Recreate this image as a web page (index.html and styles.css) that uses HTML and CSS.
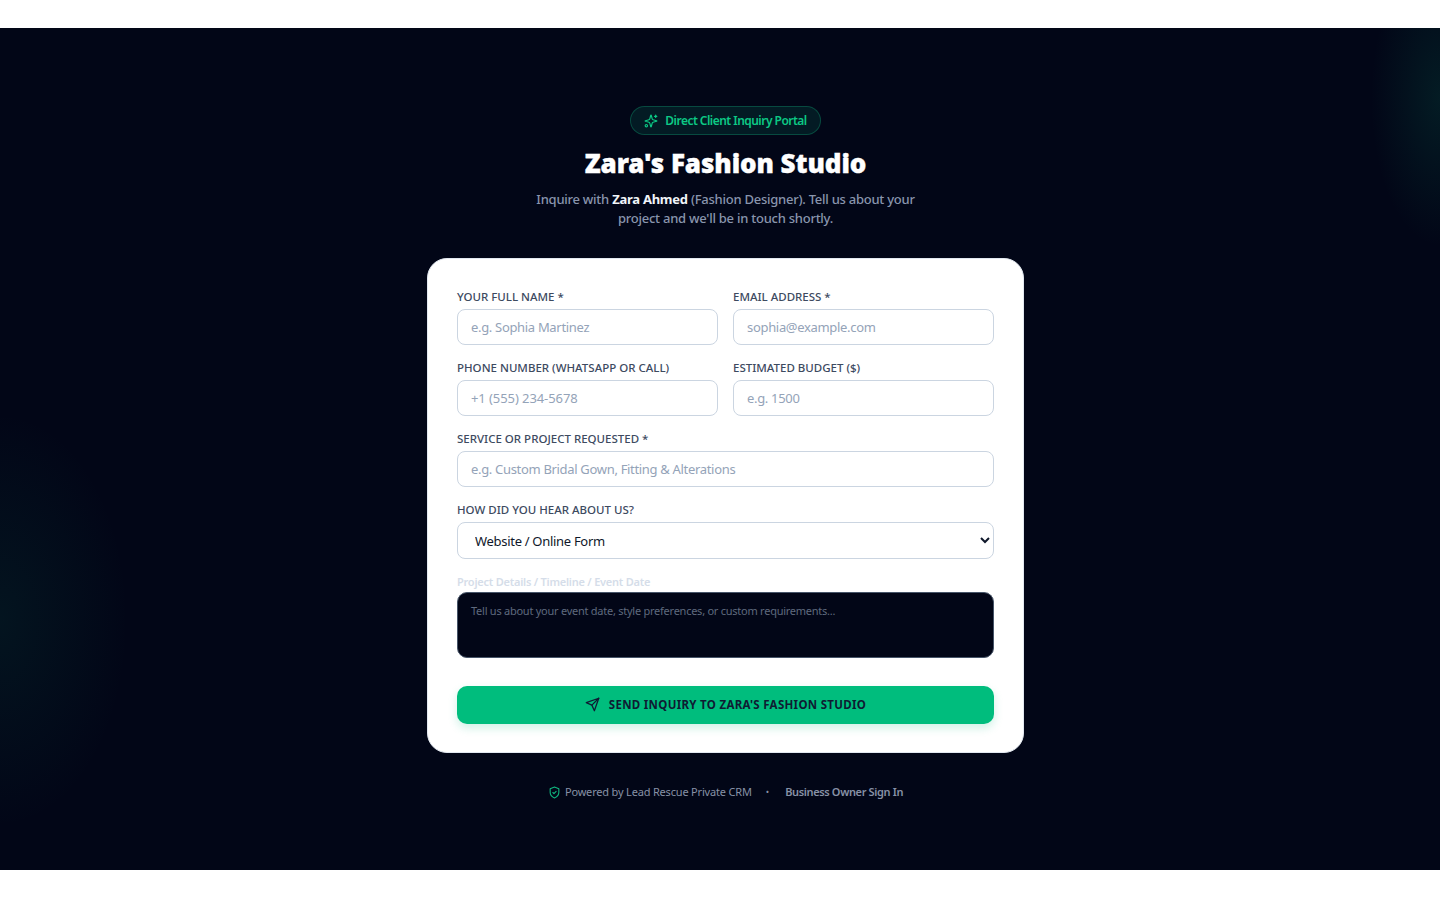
FILE: index.html
```html
<!DOCTYPE html>
<html lang="en">
<head>
<meta charset="utf-8">
<title>Zara's Fashion Studio</title>
<link rel="stylesheet" href="styles.css">
</head>
<body>
<main class="stage">
  <div class="glow glow-right"></div>
  <div class="glow glow-left"></div>
  <div class="column">
    <header class="hero">
      <div class="badge">
        <svg class="badge-icon" viewBox="0 0 24 24" fill="none" stroke="currentColor" stroke-width="2" stroke-linecap="round" stroke-linejoin="round"><path d="M9.937 15.500A2 2 0 0 0 8.500 14.063l-6.135-1.582a.5.5 0 0 1 0-.962L8.500 9.936A2 2 0 0 0 9.937 8.500l1.582-6.135a.5.5 0 0 1 .963 0L14.063 8.500A2 2 0 0 0 15.500 9.937l6.135 1.581a.5.5 0 0 1 0 .964L15.500 14.063a2 2 0 0 0-1.437 1.437l-1.582 6.135a.5.5 0 0 1-.963 0z"/><path d="M20 2v4"/><path d="M22 4h-4"/><circle cx="4" cy="20" r="2"/></svg>
        <span>Direct Client Inquiry Portal</span>
      </div>
      <h1>Zara's Fashion Studio</h1>
      <p>Inquire with <strong>Zara Ahmed</strong> (Fashion Designer). Tell us about your project and we'll be in touch shortly.</p>
    </header>
    <form class="card">
      <div class="row two">
        <div class="field"><label>YOUR FULL NAME *</label><input type="text" placeholder="e.g. Sophia Martinez"></div>
        <div class="field"><label>EMAIL ADDRESS *</label><input type="text" placeholder="sophia@example.com"></div>
      </div>
      <div class="row two">
        <div class="field"><label>PHONE NUMBER (WHATSAPP OR CALL)</label><input class="numeric" type="text" placeholder="+1 (555) 234-5678"></div>
        <div class="field"><label>ESTIMATED BUDGET ($)</label><input type="text" placeholder="e.g. 1500"></div>
      </div>
      <div class="row">
        <div class="field"><label>SERVICE OR PROJECT REQUESTED *</label><input type="text" placeholder="e.g. Custom Bridal Gown, Fitting &amp; Alterations"></div>
      </div>
      <div class="row">
        <div class="field"><label>HOW DID YOU HEAR ABOUT US?</label>
          <select><option>Website / Online Form</option></select>
        </div>
      </div>
      <div class="details">
        <label>Project Details / Timeline / Event Date</label>
        <textarea placeholder="Tell us about your event date, style preferences, or custom requirements..."></textarea>
      </div>
      <button type="button" class="submit">
        <svg viewBox="0 0 24 24" fill="none" stroke="currentColor" stroke-width="2" stroke-linecap="round" stroke-linejoin="round"><path d="M22 2 15 22l-4-9-9-4z"/><path d="M22 2 11 13"/></svg>
        <span>SEND INQUIRY TO ZARA'S FASHION STUDIO</span>
      </button>
    </form>
    <footer class="foot">
      <svg class="shield" viewBox="0 0 24 24" fill="none" stroke="currentColor" stroke-width="2" stroke-linecap="round" stroke-linejoin="round"><path d="M12 22s8-3.500 8-10V5l-8-3-8 3v7c0 6.500 8 10 8 10z"/><path d="m9 12 2 2 4-4"/></svg>
      <span class="powered">Powered by Lead Rescue Private CRM</span>
      <span class="dot">•</span>
      <a class="signin">Business Owner Sign In</a>
    </footer>
  </div>
</main>
</body>
</html>
```
FILE: styles.css
```css
* { box-sizing: border-box; }
html, body { margin: 0; height: 900px; overflow: hidden; background: #fff; }
body { padding-top: 28px; font-family: "Noto Sans", "Open Sans", sans-serif; }
.stage {
  position: relative;
  height: 842px;
  background: #020617;
  overflow: hidden;
  display: flex;
  justify-content: center;
  padding: 78px 0 0 11px;
}
.glow { position: absolute; pointer-events: none; }
.glow-right {
  top: -80px; right: -70px; width: 140px; height: 300px;
  background: radial-gradient(ellipse at center, rgba(16,185,129,.12), rgba(16,185,129,0) 70%);
}
.glow-left {
  bottom: 40px; left: -130px; width: 260px; height: 420px;
  background: radial-gradient(ellipse at center, rgba(16,185,129,.08), rgba(16,185,129,0) 70%);
}
.column { position: relative; width: 597px; display: flex; flex-direction: column; align-items: center; }
.hero { display: flex; flex-direction: column; align-items: center; text-align: center; }
.badge {
  display: flex; align-items: center; gap: 7px;
  height: 29px; padding: 0 13px;
  border: 1px solid rgba(16,185,129,.3);
  border-radius: 15px;
  background: rgba(16,185,129,.12);
  color: #0cc985;
  font-size: 12px; font-weight: 600; letter-spacing: -.53px;
}
.badge-icon { width: 14px; height: 14px; }
h1 {
  margin: 12px 0 0;
  color: #fff;
  font-size: 26px; line-height: 33px; font-weight: 900;
  letter-spacing: -.07px;
  -webkit-text-stroke: .4px #fff;
}
.hero p {
  margin: 10px 0 0;
  width: 400px;
  color: #8995ad;
  font-size: 13px; line-height: 19px; font-weight: 500;
  letter-spacing: -.25px;
}
.hero strong { color: #f1f5f9; font-weight: 700; }
.card {
  margin-top: 30px;
  width: 597px; height: 495px;
  padding: 30px 29px;
  background: #fff;
  border: 1px solid #e2e8f0;
  border-radius: 20px;
  display: flex; flex-direction: column;
}
.row { display: grid; grid-template-columns: 1fr; column-gap: 15px; margin-bottom: 15px; }
.row.two { grid-template-columns: 1fr 1fr; }
.field { display: flex; flex-direction: column; min-width: 0; }
.field label {
  height: 20px;
  color: #3d4a5f;
  font-size: 11.500px; line-height: 15px; font-weight: 500;
}
input, select, textarea { font-family: inherit; outline: none; display: block; width: 100%; }
input {
  height: 36px; padding: 0 13px;
  background: #fff;
  border: 1px solid #cbd5e1;
  border-radius: 8px;
  font-size: 13px; color: #0f172a;
  letter-spacing: -.32px;
}
input.numeric { letter-spacing: -.08px; }
input::placeholder { color: #94a3b8; opacity: 1; }
select {
  height: 37px; padding: 0 13px;
  background: #fff;
  border: 1px solid #cbd5e1;
  border-radius: 8px;
  font-size: 13px; color: #0f172a;
  letter-spacing: -.3px;
}
.details { margin-top: 2px; }
.details label {
  display: block; height: 16px;
  color: #d5dde9;
  font-size: 11px; line-height: 12px; font-weight: 600;
  letter-spacing: -.23px;
}
textarea {
  height: 66px; padding: 10px 13px;
  background: #020617;
  border: 1px solid #475569;
  border-radius: 10px;
  color: #fff;
  font-size: 11px; line-height: 15px;
  letter-spacing: -.25px;
  resize: none;
}
textarea::placeholder { color: #5f6a7e; opacity: 1; }
.submit {
  margin-top: 28px;
  height: 37.500px; width: 100%;
  flex: none;
  display: flex; align-items: center; justify-content: center; gap: 9px;
  background: #00bd7d;
  border: 0; border-radius: 10px;
  box-shadow: 0 4px 10px rgba(16,185,129,.2);
  color: #0f1b33;
  font-family: inherit;
  font-size: 11.500px; font-weight: 700; letter-spacing: .3px;
}
.submit svg { width: 15px; height: 15px; }
.foot {
  margin-top: 31px;
  display: flex; align-items: center;
  color: #8791a6;
  font-size: 11px; line-height: 16px;
}
.shield { width: 13px; height: 13px; color: #10b981; margin-right: 4px; }
.powered { letter-spacing: -.18px; }
.dot { margin: 0 16px 0 14px; font-size: 9px; }
.signin { font-weight: 600; letter-spacing: -.36px; }
```
